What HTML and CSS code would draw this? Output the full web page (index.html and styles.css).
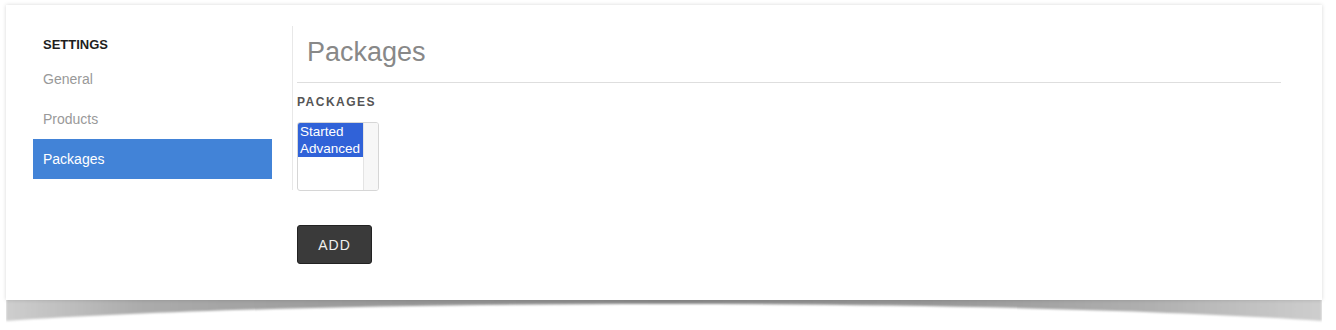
FILE: index.html
```html
<!DOCTYPE html>
<html>
<head>
<meta charset="utf-8">
<link rel="stylesheet" href="styles.css">
</head>
<body>
<div class="page">
  <div class="paper">
    <svg class="curl-shadow" viewBox="0 0 1316 34" width="1316" height="34" aria-hidden="true">
      <defs>
        <linearGradient id="shadeX" x1="0" y1="0" x2="1" y2="0">
          <stop offset="0" stop-color="#cecece"/>
          <stop offset="0.1" stop-color="#acacac"/>
          <stop offset="0.3" stop-color="#979797"/>
          <stop offset="0.5" stop-color="#8b8b8b"/>
          <stop offset="0.7" stop-color="#979797"/>
          <stop offset="0.87" stop-color="#b0b0b0"/>
          <stop offset="1" stop-color="#cecece"/>
        </linearGradient>
        <filter id="soft" x="-5%" y="-50%" width="110%" height="200%">
          <feGaussianBlur stdDeviation="1.2"/>
        </filter>
      </defs>
      <path d="M0,0 H1316 V25 C1144,13 894,8 658,8 C422,8 172,13 0,25 Z" fill="url(#shadeX)" filter="url(#soft)"/>
    </svg>
    <div class="card">
      <aside class="sidebar">
        <div class="side-heading">SETTINGS</div>
        <div class="nav-item">General</div>
        <div class="nav-item">Products</div>
        <div class="nav-item active">Packages</div>
      </aside>
      <main class="main">
        <div class="page-header"><h1 class="title">Packages</h1></div>
        <div class="field-label">PACKAGES</div>
        <div class="listbox">
          <div class="options">
            <div class="option selected">Started</div>
            <div class="option selected">Advanced</div>
          </div>
          <div class="scrolltrack"></div>
        </div>
        <button class="btn-add">ADD</button>
      </main>
    </div>
  </div>
</div>
</body>
</html>
```
FILE: styles.css
```css
html, body {
  margin: 0;
  padding: 0;
  background: #fff;
  font-family: "Liberation Sans", Arial, Helvetica, sans-serif;
}

.page {
  height: 330px;
  padding: 5px 0 0 6px;
  box-sizing: border-box;
  overflow: hidden;
}

.paper {
  position: relative;
  width: 1316px;
  height: 295px;
  z-index: 0;
}

.curl-shadow {
  position: absolute;
  z-index: -1;
  left: 0;
  bottom: -30px;
  display: block;
}

.card {
  height: 100%;
  box-sizing: border-box;
  padding: 21px 41px 0 27px;
  background: #fff;
  display: flex;
  align-items: flex-start;
  box-shadow: 0 0 4px rgba(0, 0, 0, 0.16);
}

.sidebar {
  width: 239px;
  padding: 8px 20px 11px 0;
  border-right: 1px solid #e8e8e8;
}

.side-heading {
  font-size: 13px;
  font-weight: bold;
  color: #1e1e1e;
  line-height: 20px;
  padding-left: 10px;
  margin-top: 1px;
  margin-bottom: 4px;
}

.nav-item {
  height: 40px;
  line-height: 40px;
  padding-left: 10px;
  font-size: 14px;
  color: #999;
}

.nav-item.active {
  background: #4283d7;
  color: #fff;
}

.main {
  flex: 1;
  padding-left: 4px;
}

.page-header {
  border-bottom: 1px solid #dedede;
  padding: 8px 0 12px 10px;
}

.title {
  margin: 0;
  font-size: 27px;
  line-height: 36px;
  font-weight: normal;
  color: #888;
}

.field-label {
  margin-top: 11px;
  font-size: 12px;
  line-height: 16px;
  font-weight: bold;
  letter-spacing: 1.5px;
  color: #555;
}

.listbox {
  margin-top: 12px;
  width: 82px;
  height: 69px;
  box-sizing: border-box;
  border: 1px solid #d6d6d6;
  border-radius: 3px;
  display: flex;
  overflow: hidden;
}

.options {
  flex: 1;
}

.option {
  font-size: 13.5px;
  line-height: 17px;
  padding-left: 2px;
  color: #222;
  white-space: nowrap;
}

.option.selected {
  background: #3062d8;
  color: #fff;
}

.scrolltrack {
  width: 14px;
  background: #f7f7f7;
  border-left: 1px solid #e4e4e4;
}

.btn-add {
  display: block;
  margin-top: 34px;
  width: 75px;
  height: 39px;
  background: #3a3a3a;
  border: 1px solid #222;
  border-radius: 3px;
  color: #f0f0f0;
  font-family: "Liberation Sans", Arial, sans-serif;
  font-size: 14px;
  letter-spacing: 1px;
  padding: 0;
}
```
